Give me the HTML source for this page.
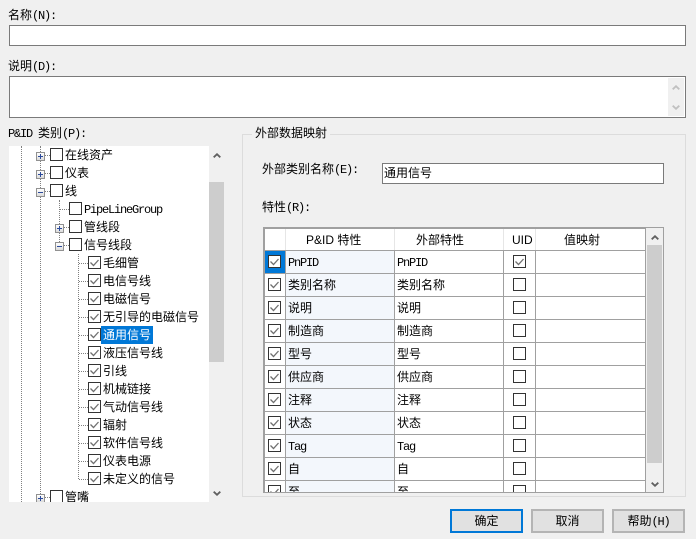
<!DOCTYPE html>
<html lang="zh"><head><meta charset="utf-8"><style>
html,body{margin:0;padding:0}
body{width:696px;height:539px;overflow:hidden;background:#f0f0f0;position:relative;font:12px/18px "WenQuanYi Zen Hei","Noto Sans CJK SC",sans-serif;color:#000}
div,svg{position:absolute}
i{font:12px/18px "Liberation Mono",monospace;letter-spacing:-1.2px}
.t{white-space:nowrap;height:18px}
.in{background:#fff;border:1px solid #7a7a7a;box-sizing:border-box}
.cb{width:13px;height:13px}
.ex{width:9px;height:9px;box-sizing:border-box;border:1px solid #919191;background:linear-gradient(#fff,#dcdcdc)}
.ex:before{content:"";position:absolute;left:1px;top:3px;width:5px;height:1px;background:#2b4a9b}
.ex.p:after{content:"";position:absolute;left:3px;top:1px;width:1px;height:5px;background:#2b4a9b}
.v{width:0;border-left:1px dotted #808080}
.h{height:0;border-top:1px dotted #808080}
.l{background:#a0a0a0}
.btn{box-sizing:border-box;height:24px;top:509px;background:#e1e1e1;border:2px solid #b4b4b4;text-align:center;line-height:20px}
</style></head><body>
<svg width="0" height="0" style="left:0;top:0"><defs>
<symbol id="c0" viewBox="0 0 13 13"><rect x=".5" y=".5" width="12" height="12" fill="#fff" stroke="#333"/></symbol>
<symbol id="c1" viewBox="0 0 13 13"><rect x=".5" y=".5" width="12" height="12" fill="#fff" stroke="#333"/><path d="M2.5 6.5l3 3 5-5.5" fill="none" stroke="#707070" stroke-width="1.3"/></symbol>
<symbol id="up" viewBox="0 0 8 5"><path d="M.7 4.3L4 1.2l3.3 3.1" fill="none" stroke="currentColor" stroke-width="1.8"/></symbol>
<symbol id="dn" viewBox="0 0 8 5"><path d="M.7.7L4 3.8 7.3.7" fill="none" stroke="currentColor" stroke-width="1.8"/></symbol>
</defs></svg>

<div class="t" style="left:8px;top:6px">名称<i>(N):</i></div>
<div class="in" style="left:9px;top:25px;width:677px;height:21px"></div>
<div class="t" style="left:8px;top:57px">说明<i>(D):</i></div>
<div class="in" style="left:9px;top:76px;width:677px;height:42px"></div>
<div style="left:668px;top:78px;width:16px;height:38px;background:#f0f0f0"></div>
<svg width="8" height="5" style="left:672px;top:85px;color:#c0c0c0"><use href="#up"/></svg>
<svg width="8" height="5" style="left:672px;top:105px;color:#c0c0c0"><use href="#dn"/></svg>
<div class="t" style="left:8px;top:124px"><i>P&amp;ID </i>类别<i>(P):</i></div>

<!-- tree -->
<div style="left:9px;top:146px;width:200px;height:356px;background:#fff"></div>
<div style="left:0;top:0;width:209px;height:502px;overflow:hidden">
<div class="v" style="left:21px;top:146px;height:356px"></div>
<div class="v" style="left:40px;top:146px;height:356px"></div>
<div class="v" style="left:59px;top:200px;height:46px"></div>
<div class="v" style="left:78px;top:254px;height:225px"></div>
<div class="h" style="left:45px;top:155px;width:5px"></div>
<div class="h" style="left:45px;top:173px;width:5px"></div>
<div class="h" style="left:45px;top:191px;width:5px"></div>
<div class="h" style="left:45px;top:497px;width:5px"></div>
<div class="h" style="left:60px;top:209px;width:9px"></div>
<div class="h" style="left:64px;top:227px;width:5px"></div>
<div class="h" style="left:64px;top:245px;width:5px"></div>
<div class="h" style="left:79px;top:263px;width:9px"></div>
<div class="h" style="left:79px;top:281px;width:9px"></div>
<div class="h" style="left:79px;top:299px;width:9px"></div>
<div class="h" style="left:79px;top:317px;width:9px"></div>
<div class="h" style="left:79px;top:335px;width:9px"></div>
<div class="h" style="left:79px;top:353px;width:9px"></div>
<div class="h" style="left:79px;top:371px;width:9px"></div>
<div class="h" style="left:79px;top:389px;width:9px"></div>
<div class="h" style="left:79px;top:407px;width:9px"></div>
<div class="h" style="left:79px;top:425px;width:9px"></div>
<div class="h" style="left:79px;top:443px;width:9px"></div>
<div class="h" style="left:79px;top:461px;width:9px"></div>
<div class="h" style="left:79px;top:479px;width:9px"></div>
<div class="ex p" style="left:36px;top:152px"></div>
<div class="ex p" style="left:36px;top:170px"></div>
<div class="ex" style="left:36px;top:188px"></div>
<div class="ex p" style="left:55px;top:224px"></div>
<div class="ex" style="left:55px;top:242px"></div>
<div class="ex p" style="left:36px;top:494px"></div>

<svg class="cb" style="left:50px;top:148px"><use href="#c0"/></svg><div class="t" style="left:65px;top:146px">在线资产</div>
<svg class="cb" style="left:50px;top:166px"><use href="#c0"/></svg><div class="t" style="left:65px;top:164px">仪表</div>
<svg class="cb" style="left:50px;top:184px"><use href="#c0"/></svg><div class="t" style="left:65px;top:182px">线</div>
<svg class="cb" style="left:69px;top:202px"><use href="#c0"/></svg><div class="t" style="left:84px;top:200px"><i>PipeLineGroup</i></div>
<svg class="cb" style="left:69px;top:220px"><use href="#c0"/></svg><div class="t" style="left:84px;top:218px">管线段</div>
<svg class="cb" style="left:69px;top:238px"><use href="#c0"/></svg><div class="t" style="left:84px;top:236px">信号线段</div>
<svg class="cb" style="left:88px;top:256px"><use href="#c1"/></svg><div class="t" style="left:103px;top:254px">毛细管</div>
<svg class="cb" style="left:88px;top:274px"><use href="#c1"/></svg><div class="t" style="left:103px;top:272px">电信号线</div>
<svg class="cb" style="left:88px;top:292px"><use href="#c1"/></svg><div class="t" style="left:103px;top:290px">电磁信号</div>
<svg class="cb" style="left:88px;top:310px"><use href="#c1"/></svg><div class="t" style="left:103px;top:308px">无引导的电磁信号</div>
<svg class="cb" style="left:88px;top:328px"><use href="#c1"/></svg><div class="t" style="left:101px;top:326px;width:52px;background:#0078d7;color:#fff;text-indent:2px">通用信号</div>
<svg class="cb" style="left:88px;top:346px"><use href="#c1"/></svg><div class="t" style="left:103px;top:344px">液压信号线</div>
<svg class="cb" style="left:88px;top:364px"><use href="#c1"/></svg><div class="t" style="left:103px;top:362px">引线</div>
<svg class="cb" style="left:88px;top:382px"><use href="#c1"/></svg><div class="t" style="left:103px;top:380px">机械链接</div>
<svg class="cb" style="left:88px;top:400px"><use href="#c1"/></svg><div class="t" style="left:103px;top:398px">气动信号线</div>
<svg class="cb" style="left:88px;top:418px"><use href="#c1"/></svg><div class="t" style="left:103px;top:416px">辐射</div>
<svg class="cb" style="left:88px;top:436px"><use href="#c1"/></svg><div class="t" style="left:103px;top:434px">软件信号线</div>
<svg class="cb" style="left:88px;top:454px"><use href="#c1"/></svg><div class="t" style="left:103px;top:452px">仪表电源</div>
<svg class="cb" style="left:88px;top:472px"><use href="#c1"/></svg><div class="t" style="left:103px;top:470px">未定义的信号</div>
<svg class="cb" style="left:50px;top:490px"><use href="#c0"/></svg><div class="t" style="left:65px;top:488px">管嘴</div>
</div>
<div style="left:209px;top:182px;width:15px;height:180px;background:#cdcdcd"></div>
<svg width="8" height="5" style="left:213px;top:153px;color:#606060"><use href="#up"/></svg>
<svg width="8" height="5" style="left:213px;top:491px;color:#606060"><use href="#dn"/></svg>

<!-- group -->
<div style="left:242px;top:134px;width:444px;height:363px;box-sizing:border-box;border:1px solid #dcdcdc"></div>
<div class="t" style="left:252px;top:124px;width:78px;background:#f0f0f0;text-indent:3px">外部数据映射</div>
<div class="t" style="left:262px;top:160px">外部类别名称<i>(E):</i></div>
<div class="in" style="left:382px;top:163px;width:282px;height:21px"></div>
<div class="t" style="left:384px;top:164px">通用信号</div>
<div class="t" style="left:262px;top:198px">特性<i>(R):</i></div>

<!-- grid -->
<div style="left:263px;top:227px;width:401px;height:266px;background:#fff;box-sizing:border-box;border:1px solid #a0a0a0;border-left-width:2px;border-top-width:2px"></div>
<div style="left:0;top:0;width:696px;height:492px;overflow:hidden">
<div style="left:286px;top:251px;width:108px;height:241px;background:#f3f7fc"></div>
<div style="left:265px;top:251px;width:20px;height:22px;background:#0078d7"></div>
<div style="left:285px;top:229px;width:1px;height:21px;background:#e6e6e6"></div>
<div style="left:394px;top:229px;width:1px;height:21px;background:#e6e6e6"></div>
<div style="left:503px;top:229px;width:1px;height:21px;background:#e6e6e6"></div>
<div style="left:535px;top:229px;width:1px;height:21px;background:#e6e6e6"></div>
<div class="l" style="left:645px;top:229px;width:1px;height:263px"></div>
<div class="l" style="left:285px;top:250px;width:1px;height:242px"></div>
<div class="l" style="left:394px;top:250px;width:1px;height:242px"></div>
<div class="l" style="left:503px;top:250px;width:1px;height:242px"></div>
<div class="l" style="left:535px;top:250px;width:1px;height:242px"></div>
<div class="l" style="left:265px;top:250px;width:380px;height:1px"></div>
<div class="l" style="left:265px;top:273px;width:380px;height:1px"></div>
<div class="l" style="left:265px;top:296px;width:380px;height:1px"></div>
<div class="l" style="left:265px;top:319px;width:380px;height:1px"></div>
<div class="l" style="left:265px;top:342px;width:380px;height:1px"></div>
<div class="l" style="left:265px;top:365px;width:380px;height:1px"></div>
<div class="l" style="left:265px;top:388px;width:380px;height:1px"></div>
<div class="l" style="left:265px;top:411px;width:380px;height:1px"></div>
<div class="l" style="left:265px;top:434px;width:380px;height:1px"></div>
<div class="l" style="left:265px;top:457px;width:380px;height:1px"></div>
<div class="l" style="left:265px;top:480px;width:380px;height:1px"></div>
<div class="t" style="left:306px;top:231px;font-family:'Liberation Sans','WenQuanYi Zen Hei',sans-serif">P&amp;ID 特性</div>
<div class="t" style="left:416px;top:231px">外部特性</div>
<div class="t" style="left:512px;top:231px;font-family:'Liberation Sans',sans-serif">UID</div>
<div class="t" style="left:564px;top:231px">值映射</div>

<svg class="cb" style="left:268px;top:255px"><use href="#c1"/></svg><div class="t" style="left:288px;top:253px"><i>PnPID</i></div><div class="t" style="left:397px;top:253px"><i>PnPID</i></div><svg class="cb" style="left:513px;top:255px"><use href="#c1"/></svg>
<svg class="cb" style="left:268px;top:278px"><use href="#c1"/></svg><div class="t" style="left:288px;top:276px">类别名称</div><div class="t" style="left:397px;top:276px">类别名称</div><svg class="cb" style="left:513px;top:278px"><use href="#c0"/></svg>
<svg class="cb" style="left:268px;top:301px"><use href="#c1"/></svg><div class="t" style="left:288px;top:299px">说明</div><div class="t" style="left:397px;top:299px">说明</div><svg class="cb" style="left:513px;top:301px"><use href="#c0"/></svg>
<svg class="cb" style="left:268px;top:324px"><use href="#c1"/></svg><div class="t" style="left:288px;top:322px">制造商</div><div class="t" style="left:397px;top:322px">制造商</div><svg class="cb" style="left:513px;top:324px"><use href="#c0"/></svg>
<svg class="cb" style="left:268px;top:347px"><use href="#c1"/></svg><div class="t" style="left:288px;top:345px">型号</div><div class="t" style="left:397px;top:345px">型号</div><svg class="cb" style="left:513px;top:347px"><use href="#c0"/></svg>
<svg class="cb" style="left:268px;top:370px"><use href="#c1"/></svg><div class="t" style="left:288px;top:368px">供应商</div><div class="t" style="left:397px;top:368px">供应商</div><svg class="cb" style="left:513px;top:370px"><use href="#c0"/></svg>
<svg class="cb" style="left:268px;top:393px"><use href="#c1"/></svg><div class="t" style="left:288px;top:391px">注释</div><div class="t" style="left:397px;top:391px">注释</div><svg class="cb" style="left:513px;top:393px"><use href="#c0"/></svg>
<svg class="cb" style="left:268px;top:416px"><use href="#c1"/></svg><div class="t" style="left:288px;top:414px">状态</div><div class="t" style="left:397px;top:414px">状态</div><svg class="cb" style="left:513px;top:416px"><use href="#c0"/></svg>
<svg class="cb" style="left:268px;top:439px"><use href="#c1"/></svg><div class="t" style="left:288px;top:437px"><i>Tag</i></div><div class="t" style="left:397px;top:437px"><i>Tag</i></div><svg class="cb" style="left:513px;top:439px"><use href="#c0"/></svg>
<svg class="cb" style="left:268px;top:462px"><use href="#c1"/></svg><div class="t" style="left:288px;top:460px">自</div><div class="t" style="left:397px;top:460px">自</div><svg class="cb" style="left:513px;top:462px"><use href="#c0"/></svg>
<svg class="cb" style="left:268px;top:485px"><use href="#c1"/></svg><div class="t" style="left:288px;top:483px">至</div><div class="t" style="left:397px;top:483px">至</div><svg class="cb" style="left:513px;top:485px"><use href="#c0"/></svg>
</div>
<div class="l" style="left:263px;top:492px;width:401px;height:1px"></div>
<div style="left:646px;top:228px;width:17px;height:264px;background:#f0f0f0"></div>
<div style="left:647px;top:245px;width:15px;height:218px;background:#cdcdcd"></div>
<svg width="8" height="5" style="left:651px;top:235px;color:#606060"><use href="#up"/></svg>
<svg width="8" height="5" style="left:651px;top:482px;color:#606060"><use href="#dn"/></svg>

<!-- buttons -->
<div class="btn" style="left:450px;width:73px;border-color:#0078d7">确定</div>
<div class="btn" style="left:531px;width:73px">取消</div>
<div class="btn" style="left:612px;width:73px">帮助<i style="line-height:20px">(H)</i></div>
</body></html>
